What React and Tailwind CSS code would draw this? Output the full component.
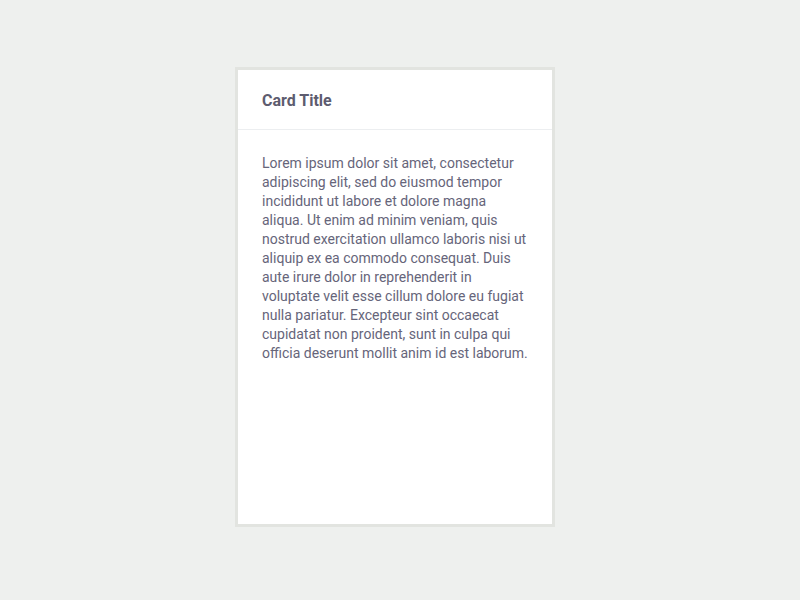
export default function App() {
  return (
    <div className="w-[800px] h-[600px] bg-[#eef0ee] pt-[67px] pl-[235px]" style={{ fontFamily: "Roboto, 'Liberation Sans', sans-serif" }}>
      <div className="w-[320px] h-[460px] border-[3px] border-[#e2e4e0] bg-white flex flex-col">
        <div className="h-[60px] border-b border-[#eceef0] px-6 flex items-center">
          <h2 className="text-[16px] font-bold text-[#5d5c6f] pt-[3px]">Card Title</h2>
        </div>
        <div className="px-6 pt-[24px]">
          <p className="text-[14px] leading-[19px] text-[#66657a]">
            Lorem ipsum dolor sit amet, consectetur adipiscing elit, sed do eiusmod tempor incididunt ut labore et dolore magna aliqua. Ut enim ad minim veniam, quis nostrud exercitation ullamco laboris nisi ut aliquip ex ea commodo consequat. Duis aute irure dolor in reprehenderit in voluptate velit esse cillum dolore eu fugiat nulla pariatur. Excepteur sint occaecat cupidatat non proident, sunt in culpa qui officia deserunt mollit anim id est laborum.
          </p>
        </div>
      </div>
    </div>
  );
}
